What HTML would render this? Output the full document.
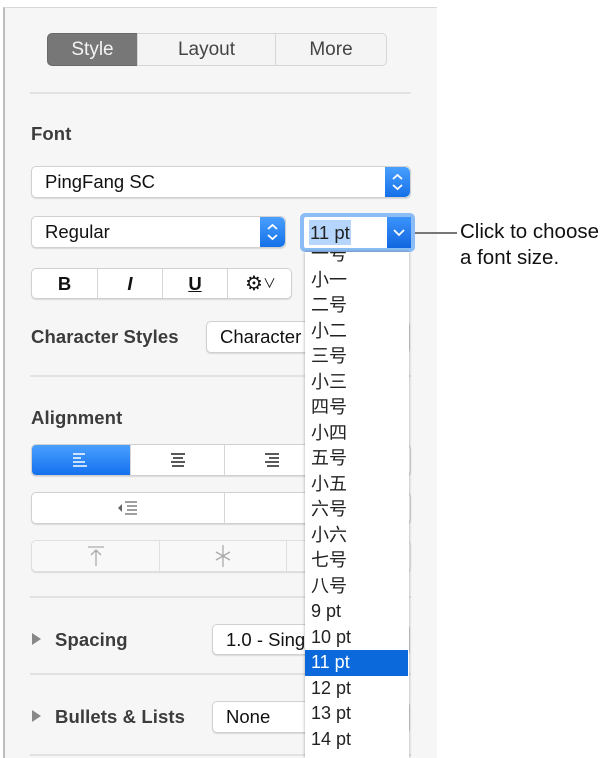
<!DOCTYPE html>
<html><head><meta charset="utf-8"><style>
*{box-sizing:border-box;margin:0;padding:0}
body{width:616px;height:758px;background:#fff;position:relative;overflow:hidden;font-family:"Liberation Sans","Noto Sans CJK SC",sans-serif;color:#222}
.abs{position:absolute}
#panel{left:3px;top:7px;width:434px;height:751px;background:#f6f6f6;border-left:2px solid #bdbdbd;border-top:1px solid #d8d8d8}
.div{position:absolute;left:30px;width:381px;height:2px;background:#e2e2e2}
.lbl{position:absolute;font-size:18.5px;color:#3c3c3c;font-weight:bold;letter-spacing:0.1px}
.box{position:absolute;background:#fff;border:1px solid #d0d0d0;border-radius:5px;box-shadow:0 1px 1px rgba(0,0,0,.12);font-size:18.5px;color:#111;line-height:30px;padding-left:13px;overflow:hidden;white-space:nowrap}
.step{position:absolute;right:0;top:0;bottom:0;width:25px;background:linear-gradient(#4aa0ff,#1470e8);border-radius:0 5px 5px 0}
.seg{position:absolute;top:33px;height:33px;font-size:19px;text-align:center;line-height:32px;color:#444;background:#f4f4f4;border:1px solid #d6d6d6}
.li{position:absolute;left:0;width:103px;height:25.5px;line-height:25.5px;padding-left:6px;font-size:18px;color:#222}
.cell{position:absolute;top:0;bottom:0;border-left:1px solid #d6d6d6;display:flex;align-items:center;justify-content:center}
</style></head><body>
<div id="panel" class="abs"></div>
<div class="seg" style="left:47px;width:91px;background:#777;color:#f4f4f4;border-color:#6a6a6a;border-radius:5px 0 0 5px">Style</div>
<div class="seg" style="left:137px;width:139px">Layout</div>
<div class="seg" style="left:275px;width:112px;border-radius:0 5px 5px 0">More</div>
<div class="div" style="top:92px"></div>
<div class="lbl" style="left:31px;top:123px">Font</div>
<div class="box" style="left:31px;top:166px;width:380px;height:32px">PingFang SC<div class="step"><svg width="25" height="30" viewBox="0 0 25 30"><path d="M8 12l4.5-4 4.5 4M8 18l4.5 4 4.5-4" stroke="#fff" stroke-width="1.8" fill="none"/></svg></div></div>
<div class="box" style="left:31px;top:216px;width:255px;height:32px">Regular<div class="step"><svg width="25" height="30" viewBox="0 0 25 30"><path d="M8 12l4.5-4 4.5 4M8 18l4.5 4 4.5-4" stroke="#fff" stroke-width="1.8" fill="none"/></svg></div></div>
<div class="abs" style="left:300px;top:213px;width:115px;height:39px;background:#8cbcf5;border-radius:5px"></div>
<div class="abs" style="left:304px;top:217px;width:107px;height:31px;background:#fff;border-radius:2px"><span class="abs" style="left:5px;top:3px;font-size:18.5px;background:#b5d5fd;line-height:25px;padding:0 1px">11 pt</span><div class="abs" style="right:0;top:0;width:24px;height:31px;background:linear-gradient(#3c94fb,#1166e0)"><svg width="24" height="31"><path d="M7 13l5 5 5-5" stroke="#fff" stroke-width="1.8" fill="none"/></svg></div></div>
<div class="abs" style="left:415px;top:232px;width:42px;height:1.5px;background:#777"></div>
<div class="abs" style="left:460px;top:219px;font-size:20.5px;color:#111;line-height:26px">Click to choose<br>a font size.</div>
<div class="box" style="left:31px;top:268px;width:261px;height:31px;padding:0">
<div class="cell" style="left:0;width:65px;border:0;font-weight:bold">B</div>
<div class="cell" style="left:65px;width:65px;font-style:italic;font-weight:bold">I</div>
<div class="cell" style="left:130px;width:65px;font-weight:bold;text-decoration:underline">U</div>
<div class="cell" style="left:195px;width:66px;font-size:20px">⚙︎<span style="font-size:13px">∨</span></div></div>
<div class="lbl" style="left:31px;top:326px">Character Styles</div>
<div class="box" style="left:206px;top:321px;width:204px;height:32px">Character Styles</div>
<div class="div" style="top:375px"></div>
<div class="lbl" style="left:31px;top:407px">Alignment</div>
<div class="box" style="left:31px;top:444px;width:380px;height:32px;padding:0">
<div class="cell" style="left:0;width:98px;border:0;background:linear-gradient(#4aa0ff,#1470ee)"><svg width="18" height="14"><path d="M1 1h12M1 5h8M1 9h12M1 13h14" stroke="#fff" stroke-width="1.5"/></svg></div>
<div class="cell" style="left:98px;width:94px"><svg width="18" height="14"><path d="M2 1h14M4 5h10M2 9h14M3 13h12" stroke="#222" stroke-width="1.5"/></svg></div>
<div class="cell" style="left:192px;width:94px"><svg width="18" height="14"><path d="M2 1h14M6 5h10M2 9h14M4 13h12" stroke="#222" stroke-width="1.5"/></svg></div>
<div class="cell" style="left:286px;width:94px"></div></div>
<div class="box" style="left:31px;top:492px;width:380px;height:32px;padding:0">
<div class="cell" style="left:0;width:192px;border:0"><svg width="22" height="14"><path d="M1 7l4-4v8z" fill="#666"/><path d="M8 1h12M10 5h10M10 9h10M8 13h12" stroke="#666" stroke-width="1.3"/></svg></div>
<div class="cell" style="left:192px;width:188px"></div></div>
<div class="box" style="left:31px;top:540px;width:380px;height:32px;padding:0;background:#f8f8f8;border-color:#e0e0e0">
<div class="cell" style="left:0;width:127px;border:0"><svg width="20" height="22"><path d="M2 2h16M10 21V5M5 10l5-5 5 5" stroke="#aaa" stroke-width="1.3" fill="none"/></svg></div>
<div class="cell" style="left:127px;width:127px;border-color:#e0e0e0"><svg width="20" height="24"><path d="M10 1v22M3 8l7 4 7-4M3 16l7-4 7 4" stroke="#aaa" stroke-width="1.3" fill="none"/></svg></div>
<div class="cell" style="left:254px;width:126px;border-color:#e0e0e0"></div></div>
<div class="div" style="top:596px"></div>
<div class="abs" style="left:32px;top:633px;width:0;height:0;border-left:9px solid #888;border-top:6px solid transparent;border-bottom:6px solid transparent"></div>
<div class="lbl" style="left:55px;top:629px">Spacing</div>
<div class="box" style="left:212px;top:624px;width:198px;height:31px">1.0 - Single</div>
<div class="div" style="top:673px"></div>
<div class="abs" style="left:32px;top:710px;width:0;height:0;border-left:9px solid #888;border-top:6px solid transparent;border-bottom:6px solid transparent"></div>
<div class="lbl" style="left:55px;top:706px">Bullets &amp; Lists</div>
<div class="box" style="left:212px;top:701px;width:198px;height:32px">None</div>
<div class="div" style="top:754px"></div>
<div class="abs" style="left:305px;top:252px;width:104px;height:506px;background:#fff;box-shadow:0 0 3px rgba(0,0,0,.35);overflow:hidden">
<div style="position:relative;top:-10px">
<div class="li" style="top:0">一号</div><div class="li" style="top:25.5px">小一</div><div class="li" style="top:51px">二号</div><div class="li" style="top:76.5px">小二</div><div class="li" style="top:102px">三号</div><div class="li" style="top:127.5px">小三</div><div class="li" style="top:153px">四号</div><div class="li" style="top:178.5px">小四</div><div class="li" style="top:204px">五号</div><div class="li" style="top:229.5px">小五</div><div class="li" style="top:255px">六号</div><div class="li" style="top:280.5px">小六</div><div class="li" style="top:306px">七号</div><div class="li" style="top:331.5px">八号</div><div class="li" style="top:357px">9 pt</div><div class="li" style="top:382.5px">10 pt</div><div class="li" style="top:408px;background:#0b69dc;color:#fff">11 pt</div><div class="li" style="top:433.5px">12 pt</div><div class="li" style="top:459px">13 pt</div><div class="li" style="top:484.5px">14 pt</div>
</div></div>
</body></html>
